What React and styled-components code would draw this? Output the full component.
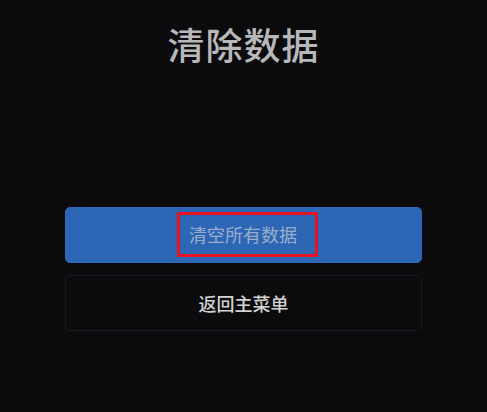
import React from "react";
import styled, { createGlobalStyle } from "styled-components";

const GlobalStyle = createGlobalStyle`
	html, body {
		margin: 0;
		padding: 0;
		background: #0b0a0d;
	}
	body {
		font-family: "Noto Sans CJK SC", "Noto Sans", sans-serif;
	}
`;

const Screen = styled.div`
	width: 487px;
	height: 412px;
	background: #0b0a0d;
	display: flex;
	flex-direction: column;
	align-items: center;
	overflow: hidden;
`;

const Title = styled.h1`
	margin: 20px 0 0;
	font-size: 37px;
	font-weight: 500;
	line-height: 48px;
	letter-spacing: 1px;
	color: #b8b8b8;
`;

const Actions = styled.div`
	margin-top: 139px;
	width: 357px;
	display: flex;
	flex-direction: column;
	gap: 12px;
`;

const Button = styled.button`
	height: 56px;
	width: 100%;
	border-radius: 5px;
	border: 1px solid ${(p) => (p.primary ? "#2e69bc" : "#1a191d")};
	background: ${(p) => (p.primary ? "#2e66b6" : "#0b0a0d")};
	color: ${(p) => (p.primary ? "#9aaecb" : "#d2d2d2")};
	font-family: "Noto Sans CJK SC", "Noto Sans", sans-serif;
	font-size: 18px;
	font-weight: ${(p) => (p.primary ? 400 : 500)};
	display: flex;
	align-items: center;
	justify-content: center;
	padding: 0;
	cursor: pointer;
`;

const Highlight = styled.span`
	display: flex;
	align-items: center;
	justify-content: flex-start;
	box-sizing: border-box;
	width: 141px;
	height: 45px;
	margin: -2px 0 0 8px;
	padding-left: 9px;
	border: 3px solid #e81422;
`;

export default function App() {
	return (
		<>
			<GlobalStyle />
			<Screen>
				<Title>清除数据</Title>
				<Actions>
					<Button primary>
						<Highlight>清空所有数据</Highlight>
					</Button>
					<Button>返回主菜单</Button>
				</Actions>
			</Screen>
		</>
	);
}
